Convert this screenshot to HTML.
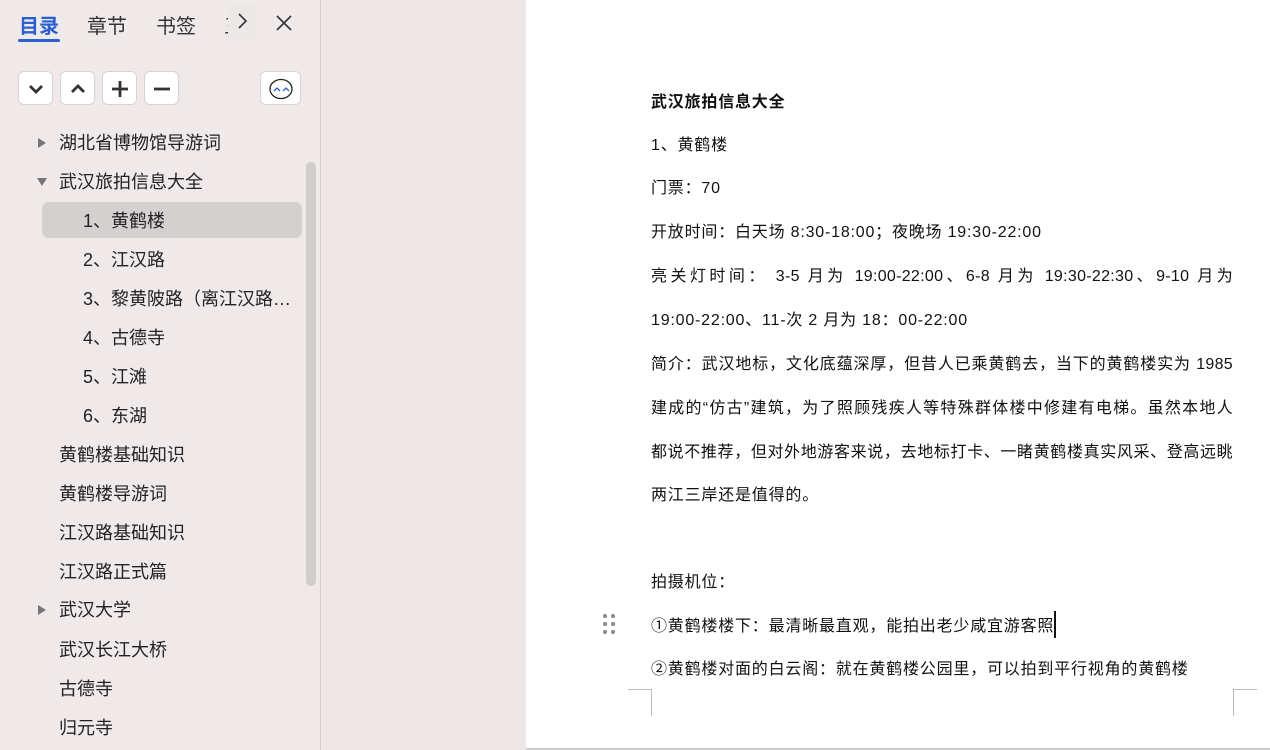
<!DOCTYPE html><html><head><meta charset="utf-8"><style>
*{margin:0;padding:0;box-sizing:border-box}
body{width:1270px;height:750px;overflow:hidden;background:#fff;font-family:"Liberation Sans","Noto Sans CJK SC",sans-serif;position:relative}
#side{position:absolute;left:0;top:0;width:320px;height:750px;background:#efe9ea}
#gap{position:absolute;left:320px;top:0;width:206px;height:750px;background:#ede6e7;border-left:1px solid #d3cdce}
.tab{position:absolute;top:10px;font-size:20px;color:#333}
.btn{position:absolute;top:71px;width:35px;height:34px;background:#fff;border:1px solid #d8d2d3;border-radius:6px}
.btn svg{position:absolute;left:0;top:0}
.it{position:absolute;left:59px;font-size:18px;color:#222;height:36px;line-height:36px;white-space:nowrap}
.sub{left:83px}
.arr{position:absolute;left:38px;width:0;height:0}
.doc{position:absolute;left:651px;width:582px;font-size:16px;color:#111;line-height:20px;white-space:nowrap;letter-spacing:0.8px}
.j{text-align:justify;text-align-last:justify;letter-spacing:0.3px}
</style></head><body>
<div id="side">
<div class="tab" style="left:19px;color:#2a5fd0;font-weight:bold">目录</div>
<div style="position:absolute;left:18px;top:39px;width:42px;height:3px;background:#2a62d4;border-radius:2px"></div>
<div class="tab" style="left:87px">章节</div>
<div class="tab" style="left:156px">书签</div>
<div class="tab" style="left:224px;width:8px;overflow:hidden">三</div>
<div style="position:absolute;left:228px;top:3px;width:29px;height:36px;background:#ece8e8;border-radius:5px"></div>
<svg style="position:absolute;left:236px;top:12px" width="14" height="18"><path d="M3 2l7 7-7 7" stroke="#333" stroke-width="1.6" fill="none"/></svg>
<svg style="position:absolute;left:275px;top:14px" width="18" height="18"><path d="M2 2l14 14M16 2L2 16" stroke="#333" stroke-width="1.6"/></svg>
<div class="btn" style="left:18px"><svg width="35" height="34"><path d="M11 14l6 6 6-6" stroke="#333" stroke-width="2.8" fill="none"/></svg></div>
<div class="btn" style="left:60px"><svg width="35" height="34"><path d="M11 20l6-6 6 6" stroke="#333" stroke-width="2.8" fill="none"/></svg></div>
<div class="btn" style="left:102px"><svg width="35" height="34"><path d="M17 9v16M9 17h16" stroke="#333" stroke-width="2.8"/></svg></div>
<div class="btn" style="left:144px"><svg width="35" height="34"><path d="M9 17h16" stroke="#333" stroke-width="2.8"/></svg></div>
<div class="btn" style="left:260px;width:41px"><svg width="41" height="34"><ellipse cx="20" cy="17" rx="11" ry="9.5" stroke="#222" stroke-width="1.3" fill="none"/><path d="M13 19l3-3 3 3M22 19l3-3 3 3" stroke="#2a62d4" stroke-width="1.3" fill="none"/></svg></div>
<div style="position:absolute;left:42px;top:202px;width:260px;height:36px;background:#d5d0d0;border-radius:7px"></div>
<div style="position:absolute;left:306px;top:162px;width:10px;height:424px;background:#d2cdcd;border-radius:5px"></div>
<div class="arr" style="top:138px;border-left:8px solid #777;border-top:5px solid transparent;border-bottom:5px solid transparent"></div>
<div class="arr" style="top:178px;left:37px;border-top:8px solid #777;border-left:5px solid transparent;border-right:5px solid transparent"></div>
<div class="arr" style="top:605px;border-left:8px solid #777;border-top:5px solid transparent;border-bottom:5px solid transparent"></div>
<div class="it" style="top:125px">湖北省博物馆导游词</div>
<div class="it" style="top:164px">武汉旅拍信息大全</div>
<div class="it sub" style="top:203px">1、黄鹤楼</div>
<div class="it sub" style="top:242px">2、江汉路</div>
<div class="it sub" style="top:281px">3、黎黄陂路（离江汉路…</div>
<div class="it sub" style="top:320px">4、古德寺</div>
<div class="it sub" style="top:359px">5、江滩</div>
<div class="it sub" style="top:398px">6、东湖</div>
<div class="it" style="top:437px">黄鹤楼基础知识</div>
<div class="it" style="top:476px">黄鹤楼导游词</div>
<div class="it" style="top:515px">江汉路基础知识</div>
<div class="it" style="top:554px">江汉路正式篇</div>
<div class="it" style="top:592px">武汉大学</div>
<div class="it" style="top:632px">武汉长江大桥</div>
<div class="it" style="top:671px">古德寺</div>
<div class="it" style="top:710px">归元寺</div>
</div>
<div id="gap"></div>
<div class="doc" style="top:93px;font-weight:bold">武汉旅拍信息大全</div>
<div class="doc" style="top:136px">1、黄鹤楼</div>
<div class="doc" style="top:179px">门票：70</div>
<div class="doc" style="top:223px">开放时间：白天场 8:30-18:00；夜晚场 19:30-22:00</div>
<div class="doc j" style="top:267px">亮关灯时间：&nbsp;3-5 月为 19:00-22:00、6-8 月为 19:30-22:30、9-10 月为</div>
<div class="doc" style="top:311px">19:00-22:00、11-次 2 月为 18：00-22:00</div>
<div class="doc j" style="top:355px">简介：武汉地标，文化底蕴深厚，但昔人已乘黄鹤去，当下的黄鹤楼实为 1985</div>
<div class="doc j" style="top:399px">建成的“仿古”建筑，为了照顾残疾人等特殊群体楼中修建有电梯。虽然本地人</div>
<div class="doc j" style="top:443px">都说不推荐，但对外地游客来说，去地标打卡、一睹黄鹤楼真实风采、登高远眺</div>
<div class="doc" style="top:486px">两江三岸还是值得的。</div>
<div class="doc" style="top:573px">拍摄机位：</div>
<div class="doc" style="top:617px">①黄鹤楼楼下：最清晰最直观，能拍出老少咸宜游客照</div>
<div style="position:absolute;left:1054px;top:611px;width:2px;height:27px;background:#111"></div>
<svg style="position:absolute;left:602px;top:613px" width="14" height="24"><g fill="#888"><circle cx="3" cy="3" r="2"/><circle cx="11" cy="3" r="2"/><circle cx="3" cy="11" r="2"/><circle cx="11" cy="11" r="2"/><circle cx="3" cy="19" r="2"/><circle cx="11" cy="19" r="2"/></g></svg>
<div class="doc" style="top:660px">②黄鹤楼对面的白云阁：就在黄鹤楼公园里，可以拍到平行视角的黄鹤楼</div>
<div style="position:absolute;left:628px;top:689px;width:24px;height:27px;border-top:1px solid #bbb;border-right:1px solid #bbb"></div>
<div style="position:absolute;left:1233px;top:689px;width:24px;height:27px;border-top:1px solid #bbb;border-left:1px solid #bbb"></div>
<div style="position:absolute;left:526px;top:748px;width:744px;height:2px;background:#ccc"></div>
</body></html>
